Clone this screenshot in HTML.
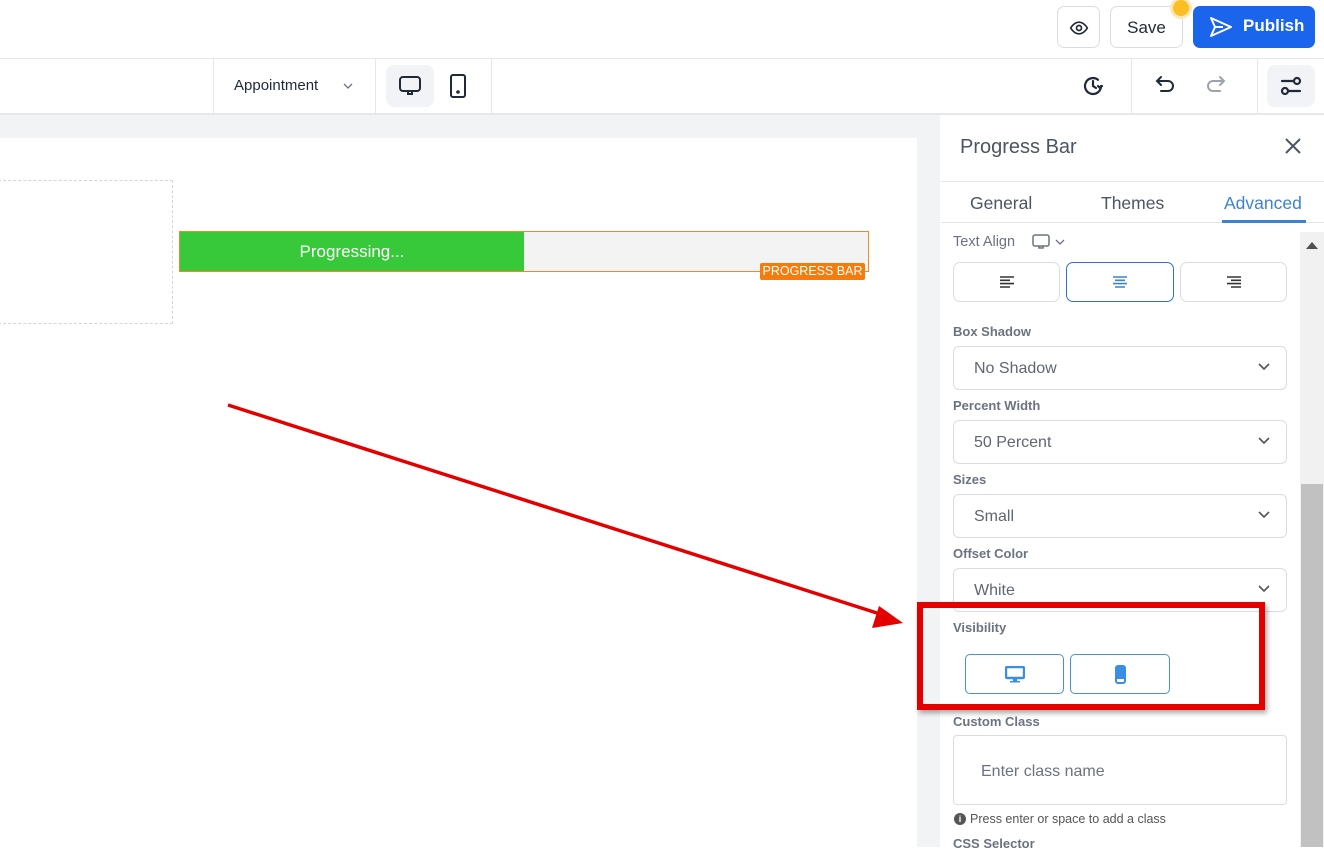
<!DOCTYPE html>
<html><head><style>
*{box-sizing:border-box;margin:0;padding:0}
body{width:1324px;height:847px;overflow:hidden;position:relative;background:#fff;font-family:"Liberation Sans",sans-serif;color:#374151}
.a{position:absolute}
.lbl{position:absolute;left:953px;font-size:13px;font-weight:bold;color:#6b7280}
.sel{position:absolute;left:953px;width:334px;height:44px;border:1px solid #d9dde3;border-radius:6px;font-size:16px;color:#5f6670;padding:13px 0 0 20px;background:#fff}
.sel svg{position:absolute;right:16px;top:16px}
.ab{position:absolute;top:262px;height:40px;border:1px solid #d9dde3;border-radius:7px;background:#fff}
.ab svg{position:absolute;left:50%;top:50%;transform:translate(-50%,-50%)}
</style></head><body>
<div class="a" style="left:0;top:58px;width:1324px;height:1px;background:#e5e7eb"></div>
<div class="a" style="left:1057px;top:6px;width:43px;height:42px;border:1px solid #d9dde3;border-radius:7px">
<svg class="a" style="left:11px;top:11px" width="20" height="20" viewBox="0 0 24 24" fill="none" stroke="#1f2937" stroke-width="2"><path d="M2 12s4-7 10-7 10 7 10 7-4 7-10 7S2 12 2 12z"/><circle cx="12" cy="12" r="3"/></svg></div>
<div class="a" style="left:1110px;top:6px;width:73px;height:42px;border:1px solid #d9dde3;border-radius:7px;font-size:17px;color:#1f2937;text-align:center;line-height:42px">Save</div>
<div class="a" style="left:1173px;top:0px;width:16px;height:16px;border-radius:50%;background:#fbbf24;box-shadow:0 0 0 3px #fde9b8"></div>
<div class="a" style="left:1193px;top:6px;width:122px;height:42px;border-radius:7px;background:#1b64ec;color:#fff;font-size:17px;font-weight:bold;line-height:40px;padding-left:50px">Publish
<svg class="a" style="left:16px;top:10px" width="24" height="22" viewBox="0 0 24 22" fill="none" stroke="#fff" stroke-width="2" stroke-linejoin="round"><path d="M2 2l20 9-20 9 4-9z M6 11h8"/></svg></div>
<div class="a" style="left:0;top:113px;width:1324px;height:2px;background:#e5e7eb"></div>
<div class="a" style="left:213px;top:59px;width:1px;height:54px;background:#e5e7eb"></div>
<div class="a" style="left:375px;top:59px;width:1px;height:54px;background:#e5e7eb"></div>
<div class="a" style="left:491px;top:59px;width:1px;height:54px;background:#e5e7eb"></div>
<div class="a" style="left:1131px;top:59px;width:1px;height:54px;background:#e5e7eb"></div>
<div class="a" style="left:1257px;top:59px;width:1px;height:54px;background:#e5e7eb"></div>
<div class="a" style="left:234px;top:77px;font-size:15px;color:#1f2937">Appointment</div>
<svg class="a" style="left:343px;top:82px" width="10" height="8" viewBox="0 0 10 8" fill="none" stroke="#6b7280" stroke-width="1.3"><path d="M1 2l4 4 4-4"/></svg>
<div class="a" style="left:386px;top:65px;width:48px;height:42px;border-radius:8px;background:#f1f3f6"></div>
<svg class="a" style="left:398px;top:75px" width="24" height="22" viewBox="0 0 24 22" fill="none" stroke="#1f2937" stroke-width="2"><rect x="2" y="2" width="20" height="14" rx="3"/><path d="M10 16v3h4v-3"/></svg>
<svg class="a" style="left:449px;top:74px" width="18" height="24" viewBox="0 0 18 24" fill="none" stroke="#1f2937" stroke-width="2"><rect x="2" y="1" width="14" height="22" rx="2"/><circle cx="9" cy="18" r="0.8" fill="#1f2937"/></svg>
<svg class="a" style="left:1081px;top:74px" width="24" height="24" viewBox="0 0 24 24" fill="none" stroke="#1f2937" stroke-width="2.2" stroke-linecap="round"><path d="M20 12a8 8 0 1 1-3-6.2"/><path d="M12 7v5l3 2"/><path d="M21 12l-2 2-2-2"/></svg>
<svg class="a" style="left:1154px;top:74px" width="24" height="22" viewBox="0 0 24 22" fill="none" stroke="#1f2937" stroke-width="2" stroke-linecap="round"><path d="M7 3L3 7l4 4M3 7h11a5 5 0 0 1 0 10H7"/></svg>
<svg class="a" style="left:1203px;top:74px" width="24" height="22" viewBox="0 0 24 22" fill="none" stroke="#9ca3af" stroke-width="2" stroke-linecap="round"><path d="M17 3l4 4-4 4M21 7H10a5 5 0 0 0 0 10h7"/></svg>
<div class="a" style="left:1267px;top:65px;width:48px;height:42px;border-radius:8px;background:#f1f3f6"></div>
<svg class="a" style="left:1279px;top:75px" width="24" height="22" viewBox="0 0 24 22" fill="none" stroke="#1f2937" stroke-width="2.2" stroke-linecap="round"><path d="M3 6h11"/><circle cx="18" cy="6" r="3"/><circle cx="6" cy="16" r="3"/><path d="M10 16h11"/></svg>
<div class="a" style="left:0;top:115px;width:940px;height:732px;background:#f2f3f5"></div>
<div class="a" style="left:0;top:138px;width:917px;height:709px;background:#fff"></div>
<div class="a" style="left:-2px;top:180px;width:175px;height:144px;border:1px dashed #d4d4d4"></div>
<div class="a" style="left:179px;top:231px;width:690px;height:41px;border:1px solid #f08a24;background:#f3f3f3"></div>
<div class="a" style="left:180px;top:232px;width:344px;height:39px;background:#38c93a;color:#fff;font-size:17px;text-align:center;line-height:39px">Progressing...</div>
<div class="a" style="left:760px;top:263px;width:105px;height:17px;background:#f47b0d;color:#fff;font-size:12.5px;text-align:center;line-height:17px;border-radius:2px">PROGRESS BAR</div>
<div class="a" style="left:940px;top:115px;width:384px;height:732px;background:#fff"></div>
<div class="a" style="left:960px;top:136px;font-size:20px;color:#4b5563">Progress Bar</div>
<svg class="a" style="left:1284px;top:137px" width="18" height="18" viewBox="0 0 18 18" stroke="#4b5563" stroke-width="2"><path d="M2 2l14 14M16 2L2 16"/></svg>
<div class="a" style="left:941px;top:181px;width:383px;height:1px;background:#e5e7eb"></div>
<div class="a" style="left:941px;top:222px;width:383px;height:1px;background:#e5e7eb"></div>
<div class="a" style="left:970px;top:193px;font-size:17.5px;color:#4b5563">General</div>
<div class="a" style="left:1101px;top:193px;font-size:17.5px;color:#4b5563">Themes</div>
<div class="a" style="left:1224px;top:193px;font-size:17.5px;color:#3b82d6">Advanced</div>
<div class="a" style="left:1222px;top:220px;width:84px;height:3px;background:#3b82d6"></div>
<div class="a" style="left:1300px;top:232px;width:24px;height:615px;background:#f1f1f1"></div>
<div class="a" style="left:1301px;top:484px;width:22px;height:363px;background:#c1c1c1"></div>
<div class="a" style="left:1306px;top:242px;width:0;height:0;border-left:6px solid transparent;border-right:6px solid transparent;border-bottom:7px solid #505050"></div>
<div class="a" style="left:953px;top:234px;font-size:14.5px;color:#6b7280">Text Align</div>
<svg class="a" style="left:1032px;top:234px" width="18" height="16" viewBox="0 0 18 16" fill="none" stroke="#6b7280" stroke-width="1.5"><rect x="1" y="1" width="16" height="11" rx="2"/><path d="M7 12v2h4v-2"/></svg>
<svg class="a" style="left:1055px;top:239px" width="10" height="7" viewBox="0 0 10 7" fill="none" stroke="#6b7280" stroke-width="1.3"><path d="M1 1l4 4 4-4"/></svg>
<div class="ab" style="left:953px;width:107px"><svg width="16" height="12" viewBox="0 0 16 12" stroke="#333" stroke-width="1.6"><path d="M1 1h14M1 4.3h10M1 7.6h14M1 11h10"/></svg></div>
<div class="ab" style="left:1066px;width:108px;border-color:#2f6fd0"><svg width="16" height="12" viewBox="0 0 16 12" stroke="#3b82d6" stroke-width="1.6"><path d="M1 1h14M3 4.3h10M1 7.6h14M3 11h10"/></svg></div>
<div class="ab" style="left:1180px;width:107px"><svg width="16" height="12" viewBox="0 0 16 12" stroke="#333" stroke-width="1.6"><path d="M1 1h14M5 4.3h10M1 7.6h14M5 11h10"/></svg></div>
<div class="lbl" style="top:324px">Box Shadow</div>
<div class="sel" style="top:346px">No Shadow<svg width="12" height="8" viewBox="0 0 12 8" fill="none" stroke="#555" stroke-width="1.6"><path d="M1 1l5 5 5-5"/></svg></div>
<div class="lbl" style="top:398px">Percent Width</div>
<div class="sel" style="top:420px">50 Percent<svg width="12" height="8" viewBox="0 0 12 8" fill="none" stroke="#555" stroke-width="1.6"><path d="M1 1l5 5 5-5"/></svg></div>
<div class="lbl" style="top:472px">Sizes</div>
<div class="sel" style="top:494px">Small<svg width="12" height="8" viewBox="0 0 12 8" fill="none" stroke="#555" stroke-width="1.6"><path d="M1 1l5 5 5-5"/></svg></div>
<div class="lbl" style="top:546px">Offset Color</div>
<div class="sel" style="top:568px">White<svg width="12" height="8" viewBox="0 0 12 8" fill="none" stroke="#555" stroke-width="1.6"><path d="M1 1l5 5 5-5"/></svg></div>
<div class="lbl" style="top:620px">Visibility</div>
<div class="a" style="left:965px;top:654px;width:99px;height:40px;border:1px solid #4a8fdc;border-radius:5px"><svg class="a" style="left:39px;top:11px" width="20" height="17" viewBox="0 0 20 17"><rect x="1" y="1" width="18" height="11" rx="1" fill="none" stroke="#3b8ee6" stroke-width="2.4"/><path d="M8 13h4v2h3v1.5H5V15h3z" fill="#3b8ee6"/></svg></div>
<div class="a" style="left:1070px;top:654px;width:100px;height:40px;border:1px solid #4a8fdc;border-radius:5px"><svg class="a" style="left:44px;top:10px" width="11" height="19" viewBox="0 0 11 19"><rect x="1" y="1" width="9" height="17" rx="2" fill="none" stroke="#3b8ee6" stroke-width="2"/><rect x="2" y="2" width="7" height="12" fill="#3b8ee6"/></svg></div>
<div class="lbl" style="top:714px">Custom Class</div>
<div class="a" style="left:953px;top:735px;width:334px;height:70px;border:1px solid #d9dde3;border-radius:4px;font-size:16px;color:#6b7280;padding:27px 0 0 27px">Enter class name</div>
<div class="a" style="left:954px;top:813px;width:12px;height:12px;border-radius:50%;background:#555;color:#fff;font-size:9px;font-weight:bold;text-align:center;line-height:12px">i</div>
<div class="a" style="left:970px;top:812px;font-size:12.5px;color:#555">Press enter or space to add a class</div>
<div class="lbl" style="top:836px">CSS Selector</div>
<div class="a" style="left:917px;top:602px;width:348px;height:108px;border:6px solid #e50000;box-shadow:2px 3px 5px rgba(0,0,0,.35)"></div>
<svg class="a" style="left:0;top:0" width="940" height="847"><line x1="228" y1="405" x2="880" y2="614" stroke="#e50000" stroke-width="3.5"/><polygon points="903,623 872,628 879,606" fill="#e50000"/></svg>
</body></html>
